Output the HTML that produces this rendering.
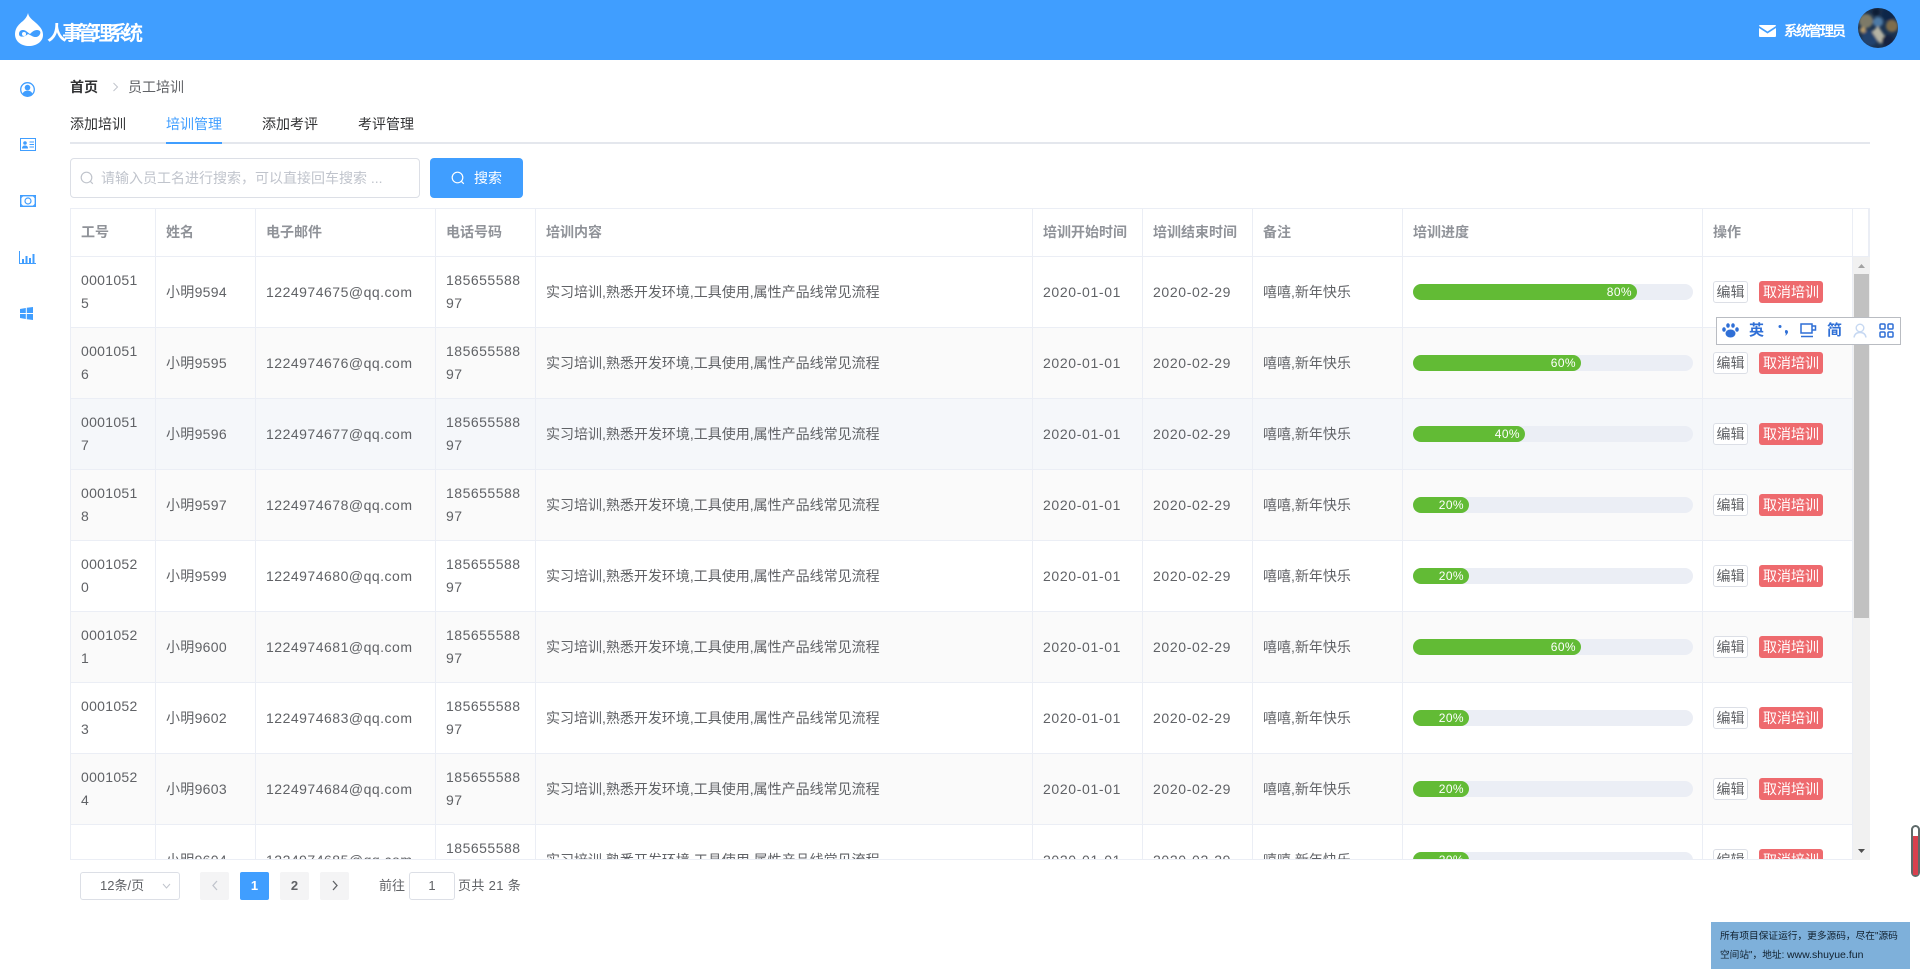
<!DOCTYPE html>
<html lang="zh-CN">
<head>
<meta charset="utf-8">
<title>人事管理系统</title>
<style>
*{box-sizing:border-box}
html,body{margin:0;padding:0;width:1920px;height:969px;overflow:hidden;background:#fff;font-family:"Liberation Sans","Noto Sans CJK SC",sans-serif;font-size:14px;color:#606266}
.a{position:absolute}
.hd{left:0;top:0;width:1920px;height:60px;background:#409eff}
.logot{left:47px;top:19px;font-size:20px;font-weight:700;color:#fff;letter-spacing:-4.8px;line-height:30px;white-space:nowrap}
.admin{left:1784px;top:21px;font-size:14px;font-weight:700;color:#fff;letter-spacing:-2px;line-height:20px;white-space:nowrap}
.crumb{top:77px;line-height:20px;white-space:nowrap}
.tab{top:114px;line-height:20px;color:#303133;white-space:nowrap}
.tw{left:70px;top:208px;width:1800px;height:652px;overflow:hidden;border-top:1px solid #ebeef5;border-left:1px solid #ebeef5;border-right:1px solid #ebeef5;border-bottom:1px solid #ebeef5}
table{border-collapse:separate;border-spacing:0;table-layout:fixed;width:1798px}
th,td{padding:12px 10px;line-height:23px;text-align:left;border-right:1px solid #ebeef5;border-bottom:1px solid #ebeef5;overflow:hidden;vertical-align:middle}
th{font-weight:700;color:#909399;height:48px;white-space:nowrap}
td{height:71px;white-space:nowrap}
tr.s td{background:#fafafa}
tr.h td{background:#f5f7fa}
.d{letter-spacing:.3px}
.p{letter-spacing:.5px}
.t{letter-spacing:.65px}
.e{letter-spacing:.5px}
.pb{width:280px;height:16px;border-radius:8px;background:#ebeef5;position:relative}
.pb i{display:block;height:16px;border-radius:8px;background:#62bb35;color:#fff;font-style:normal;font-size:12px;line-height:16px;text-align:right;padding-right:5px;letter-spacing:.4px}
.b1,.b2{display:inline-block;height:22px;line-height:20px;border-radius:3px;vertical-align:middle;text-align:center;position:relative;top:-1px}
.b1{width:35px;border:1px solid #dcdfe6;background:#fff;color:#606266}
.b2{width:64px;background:#ee6a6e;color:#fff;line-height:22px;margin-left:11px}
.pg{top:872px;width:29px;height:28px;border-radius:2px;background:#f4f4f5;text-align:center;line-height:28px;font-weight:700;font-size:13px;color:#606266}
.ptxt{top:876px;line-height:20px;font-size:13px;white-space:nowrap}
</style>
</head>
<body>
<div class="a hd"></div>
<svg class="a" style="left:15px;top:13px" width="28" height="33" viewBox="0 0 28 33">
<path d="M13 0C14 6 20 8 24 13C27 16 28 19 28 22C28 29 21 33 14 33C7 33 0 29 0 21C0 15 4 11 8 8C10 6 12 4 13 0Z" fill="#fff"/>
<path d="M4 21C4 17 8 16 11 18L15 21C17 19 19 17 22 17C25 17 26 19 25 21C24 24 20 25 17 23L13 21C10 24 4 25 4 21Z" fill="#409eff"/>
<circle cx="9" cy="21" r="2" fill="#fff"/>
</svg>
<div class="a logot">人事管理系统</div>
<svg class="a" style="left:1759px;top:25px" width="17" height="12" viewBox="0 0 17 12"><path d="M0 1C0 .4.4 0 1 0H16C16.600 0 17 .4 17 1L8.500 6.500Z M0 3L8.500 8.500L17 3V11C17 11.600 16.600 12 16 12H1C.4 12 0 11.600 0 11Z" fill="#fff"/></svg>
<div class="a admin">系统管理员</div>
<svg class="a" style="left:1858px;top:8px" width="40" height="40" viewBox="0 0 40 40">
<defs><clipPath id="c"><circle cx="20" cy="20" r="20"/></clipPath><filter id="bl"><feGaussianBlur stdDeviation="1.200"/></filter></defs>
<g clip-path="url(#c)">
<rect width="40" height="40" fill="#1c3350"/>
<g filter="url(#bl)">
<circle cx="8" cy="13" r="7" fill="#7d7a68"/>
<circle cx="30" cy="6" r="7" fill="#10284a"/>
<circle cx="34" cy="18" r="6" fill="#7f6d4c"/>
<circle cx="12" cy="30" r="8" fill="#20426d"/>
<circle cx="20" cy="14" r="5" fill="#4d7aa6"/>
<path d="M20 18L28 30L22 36L14 24Z" fill="#b5b3a4"/>
<circle cx="30" cy="33" r="6" fill="#12233f"/>
<circle cx="5" cy="22" r="3" fill="#b59a6a"/>
<circle cx="18" cy="4" r="4" fill="#0e1e36"/>
</g>
</g>
</svg>

<!-- sidebar -->
<svg class="a" style="left:20px;top:82px" width="15" height="15" viewBox="0 0 15 15"><circle cx="7.500" cy="7.500" r="6.800" fill="none" stroke="#409eff" stroke-width="1.300"/><circle cx="7.500" cy="5.600" r="2.800" fill="#409eff"/><path d="M2.500 12.500C3 9.500 5 8.800 7.500 8.800S12 9.500 12.500 12.500C11 14.500 4 14.500 2.500 12.500Z" fill="#409eff"/></svg>
<svg class="a" style="left:20px;top:138px" width="16" height="13" viewBox="0 0 16 13"><rect x=".5" y=".5" width="15" height="12" fill="none" stroke="#409eff"/><circle cx="5" cy="5" r="1.800" fill="#409eff"/><path d="M2 10.500C2 8 3.500 7.500 5 7.500S8 8 8 10.500Z" fill="#409eff"/><path d="M9.500 4H14M9.500 6.500H14M9.500 9H14" stroke="#409eff"/></svg>
<svg class="a" style="left:20px;top:195px" width="16" height="12" viewBox="0 0 16 12"><rect x=".7" y=".7" width="14.600" height="10.600" fill="none" stroke="#409eff" stroke-width="1.400"/><circle cx="8" cy="6" r="3" fill="none" stroke="#409eff" stroke-width="1.200"/><path d="M.7 3L3 .7M13 .7L15.300 3M.7 9L3 11.300M13 11.300L15.300 9" stroke="#409eff"/></svg>
<svg class="a" style="left:19px;top:251px" width="17" height="13" viewBox="0 0 17 13"><path d="M.5 0V12.500H17" fill="none" stroke="#409eff"/><path d="M3 8H5V12H3ZM6.500 5H8.500V12H6.500ZM10 7H12V12H10ZM13.500 3H15.500V12H13.500Z" fill="#409eff"/></svg>
<svg class="a" style="left:20px;top:307px" width="13" height="13" viewBox="0 0 13 13"><path d="M0 2L5.800 1V6H0ZM6.800 .8L13 0V6H6.800ZM0 7H5.800V12L0 11ZM6.800 7H13V13L6.800 12.200Z" fill="#409eff"/></svg>

<!-- breadcrumb -->
<div class="a crumb" style="left:70px;font-weight:700;color:#303133">首页</div>
<svg class="a" style="left:112px;top:82px" width="7" height="10" viewBox="0 0 7 10"><path d="M1.500 1L5.500 5L1.500 9" fill="none" stroke="#c0c4cc"/></svg>
<div class="a crumb" style="left:128px;color:#606266">员工培训</div>

<!-- tabs -->
<div class="a tab" style="left:70px">添加培训</div>
<div class="a tab" style="left:166px;color:#409eff">培训管理</div>
<div class="a tab" style="left:262px">添加考评</div>
<div class="a tab" style="left:358px">考评管理</div>
<div class="a" style="left:70px;top:142px;width:1800px;height:2px;background:#e4e7ed"></div>
<div class="a" style="left:166px;top:142px;width:56px;height:2px;background:#409eff"></div>

<!-- search -->
<div class="a" style="left:70px;top:158px;width:350px;height:40px;border:1px solid #dcdfe6;border-radius:4px;background:#fff"></div>
<svg class="a" style="left:80px;top:171px" width="14" height="14" viewBox="0 0 14 14"><circle cx="6.500" cy="6.500" r="5.300" fill="none" stroke="#c0c4cc" stroke-width="1.200"/><path d="M10.300 10.300L12.800 12.800" stroke="#c0c4cc" stroke-width="1.200"/></svg>
<div class="a" style="left:101px;top:168px;line-height:20px;color:#c0c4cc;white-space:nowrap">请输入员工名进行搜索，可以直接回车搜索 ...</div>
<div class="a" style="left:430px;top:158px;width:93px;height:40px;border-radius:4px;background:#409eff"></div>
<svg class="a" style="left:451px;top:171px" width="14" height="14" viewBox="0 0 14 14"><circle cx="6.500" cy="6.500" r="5.300" fill="none" stroke="#fff" stroke-width="1.200"/><path d="M10.300 10.300L12.800 12.800" stroke="#fff" stroke-width="1.200"/></svg>
<div class="a" style="left:474px;top:168px;line-height:20px;color:#fff;white-space:nowrap">搜索</div>

<!-- table -->
<div class="a tw">
<table>
<colgroup><col style="width:85px"><col style="width:100px"><col style="width:180px"><col style="width:100px"><col style="width:497px"><col style="width:110px"><col style="width:110px"><col style="width:150px"><col style="width:300px"><col style="width:150px"><col style="width:16px"></colgroup>
<thead><tr><th>工号</th><th>姓名</th><th>电子邮件</th><th>电话号码</th><th>培训内容</th><th>培训开始时间</th><th>培训结束时间</th><th>备注</th><th>培训进度</th><th>操作</th><th style="padding:0"></th></tr></thead>
<tbody>
<tr><td class="d">0001051<br>5</td><td class="d">小明9594</td><td class="e">1224974675@qq.com</td><td class="p">185655588<br>97</td><td>实习培训,熟悉开发环境,工具使用,属性产品线常见流程</td><td class="t">2020-01-01</td><td class="t">2020-02-29</td><td>嘻嘻,新年快乐</td><td><div class="pb"><i style="width:80%">80%</i></div></td><td><span class="b1">编辑</span><span class="b2">取消培训</span></td><td style="padding:0"></td></tr>
<tr class="s"><td class="d">0001051<br>6</td><td class="d">小明9595</td><td class="e">1224974676@qq.com</td><td class="p">185655588<br>97</td><td>实习培训,熟悉开发环境,工具使用,属性产品线常见流程</td><td class="t">2020-01-01</td><td class="t">2020-02-29</td><td>嘻嘻,新年快乐</td><td><div class="pb"><i style="width:60%">60%</i></div></td><td><span class="b1">编辑</span><span class="b2">取消培训</span></td><td style="padding:0"></td></tr>
<tr class="h"><td class="d">0001051<br>7</td><td class="d">小明9596</td><td class="e">1224974677@qq.com</td><td class="p">185655588<br>97</td><td>实习培训,熟悉开发环境,工具使用,属性产品线常见流程</td><td class="t">2020-01-01</td><td class="t">2020-02-29</td><td>嘻嘻,新年快乐</td><td><div class="pb"><i style="width:40%">40%</i></div></td><td><span class="b1">编辑</span><span class="b2">取消培训</span></td><td style="padding:0"></td></tr>
<tr class="s"><td class="d">0001051<br>8</td><td class="d">小明9597</td><td class="e">1224974678@qq.com</td><td class="p">185655588<br>97</td><td>实习培训,熟悉开发环境,工具使用,属性产品线常见流程</td><td class="t">2020-01-01</td><td class="t">2020-02-29</td><td>嘻嘻,新年快乐</td><td><div class="pb"><i style="width:20%">20%</i></div></td><td><span class="b1">编辑</span><span class="b2">取消培训</span></td><td style="padding:0"></td></tr>
<tr><td class="d">0001052<br>0</td><td class="d">小明9599</td><td class="e">1224974680@qq.com</td><td class="p">185655588<br>97</td><td>实习培训,熟悉开发环境,工具使用,属性产品线常见流程</td><td class="t">2020-01-01</td><td class="t">2020-02-29</td><td>嘻嘻,新年快乐</td><td><div class="pb"><i style="width:20%">20%</i></div></td><td><span class="b1">编辑</span><span class="b2">取消培训</span></td><td style="padding:0"></td></tr>
<tr class="s"><td class="d">0001052<br>1</td><td class="d">小明9600</td><td class="e">1224974681@qq.com</td><td class="p">185655588<br>97</td><td>实习培训,熟悉开发环境,工具使用,属性产品线常见流程</td><td class="t">2020-01-01</td><td class="t">2020-02-29</td><td>嘻嘻,新年快乐</td><td><div class="pb"><i style="width:60%">60%</i></div></td><td><span class="b1">编辑</span><span class="b2">取消培训</span></td><td style="padding:0"></td></tr>
<tr><td class="d">0001052<br>3</td><td class="d">小明9602</td><td class="e">1224974683@qq.com</td><td class="p">185655588<br>97</td><td>实习培训,熟悉开发环境,工具使用,属性产品线常见流程</td><td class="t">2020-01-01</td><td class="t">2020-02-29</td><td>嘻嘻,新年快乐</td><td><div class="pb"><i style="width:20%">20%</i></div></td><td><span class="b1">编辑</span><span class="b2">取消培训</span></td><td style="padding:0"></td></tr>
<tr class="s"><td class="d">0001052<br>4</td><td class="d">小明9603</td><td class="e">1224974684@qq.com</td><td class="p">185655588<br>97</td><td>实习培训,熟悉开发环境,工具使用,属性产品线常见流程</td><td class="t">2020-01-01</td><td class="t">2020-02-29</td><td>嘻嘻,新年快乐</td><td><div class="pb"><i style="width:20%">20%</i></div></td><td><span class="b1">编辑</span><span class="b2">取消培训</span></td><td style="padding:0"></td></tr>
<tr><td class="d"></td><td class="d">小明9604</td><td class="e">1224974685@qq.com</td><td class="p">185655588<br>97</td><td>实习培训,熟悉开发环境,工具使用,属性产品线常见流程</td><td class="t">2020-01-01</td><td class="t">2020-02-29</td><td>嘻嘻,新年快乐</td><td><div class="pb"><i style="width:20%">20%</i></div></td><td><span class="b1">编辑</span><span class="b2">取消培训</span></td><td style="padding:0"></td></tr>
</tbody>
</table>
</div>

<!-- scrollbar -->
<div class="a" style="left:1853px;top:257px;width:17px;height:603px;background:#f1f1f1"></div>
<div class="a" style="left:1854px;top:274px;width:15px;height:344px;background:#c1c1c1"></div>
<svg class="a" style="left:1857px;top:263px" width="9" height="6" viewBox="0 0 9 6"><path d="M4.500 1L8 5H1Z" fill="#a3a3a3"/></svg>
<svg class="a" style="left:1857px;top:848px" width="9" height="6" viewBox="0 0 9 6"><path d="M1 1H8L4.500 5Z" fill="#505050"/></svg>

<!-- pagination -->
<div class="a" style="left:80px;top:872px;width:100px;height:28px;border:1px solid #dcdfe6;border-radius:3px;background:#fff"></div>
<div class="a ptxt" style="left:100px;color:#606266">12条/页</div>
<svg class="a" style="left:162px;top:883px" width="9" height="6" viewBox="0 0 9 6"><path d="M1 1L4.500 5L8 1" fill="none" stroke="#c0c4cc"/></svg>
<div class="a pg" style="left:200px"><svg width="8" height="11" viewBox="0 0 8 11" style="vertical-align:-1px"><path d="M6 1L2 5.500L6 10" fill="none" stroke="#c0c4cc" stroke-width="1.300"/></svg></div>
<div class="a pg" style="left:240px;background:#409eff;color:#fff">1</div>
<div class="a pg" style="left:280px">2</div>
<div class="a pg" style="left:320px"><svg width="8" height="11" viewBox="0 0 8 11" style="vertical-align:-1px"><path d="M2 1L6 5.500L2 10" fill="none" stroke="#606266" stroke-width="1.300"/></svg></div>
<div class="a ptxt" style="left:379px">前往</div>
<div class="a" style="left:409px;top:872px;width:46px;height:28px;border:1px solid #dcdfe6;border-radius:3px;background:#fff;text-align:center;line-height:26px;font-size:13px">1</div>
<div class="a ptxt" style="left:458px;letter-spacing:.35px">页共 21 条</div>

<!-- IME toolbar -->
<div class="a" style="left:1716px;top:317px;width:185px;height:28px;background:#fff;border:1px solid #b9bcc2"></div>
<svg class="a" style="left:1722px;top:323px" width="17" height="15" viewBox="0 0 17 15"><ellipse cx="8.500" cy="10.500" rx="5" ry="4" fill="#2f6fd6"/><ellipse cx="2" cy="6.500" rx="1.800" ry="2.300" fill="#2f6fd6"/><ellipse cx="6" cy="2.500" rx="1.800" ry="2.300" fill="#2f6fd6"/><ellipse cx="11" cy="2.500" rx="1.800" ry="2.300" fill="#2f6fd6"/><ellipse cx="15" cy="6.500" rx="1.800" ry="2.300" fill="#2f6fd6"/></svg>
<div class="a" style="left:1749px;top:322px;font-size:15px;line-height:18px;font-weight:700;color:#2f6fd6">英</div>
<svg class="a" style="left:1778px;top:324px" width="11" height="13" viewBox="0 0 11 13"><circle cx="2" cy="2.500" r="1.500" fill="#2f6fd6"/><path d="M8 6C10 6 10.500 8 9.500 9.500L7.500 12L7.800 9.500C6.500 8.500 6.800 6 8 6Z" fill="#2f6fd6"/></svg>
<svg class="a" style="left:1800px;top:323px" width="17" height="15" viewBox="0 0 17 15"><path d="M1 1H12V10H1ZM12 3H15.500V7H12" fill="none" stroke="#2f6fd6" stroke-width="1.500"/><path d="M1 13.500H13" stroke="#2f6fd6" stroke-width="1.500"/></svg>
<div class="a" style="left:1827px;top:322px;font-size:15px;line-height:18px;font-weight:700;color:#2f6fd6">简</div>
<svg class="a" style="left:1853px;top:323px" width="14" height="15" viewBox="0 0 14 15"><circle cx="7" cy="5" r="3.800" fill="none" stroke="#c6d8f2" stroke-width="1.400"/><path d="M1 14.500C1.500 11 4 9.500 7 9.500S12.500 11 13 14.500" fill="none" stroke="#c6d8f2" stroke-width="1.400"/></svg>
<svg class="a" style="left:1879px;top:323px" width="15" height="15" viewBox="0 0 15 15"><g fill="none" stroke="#2f6fd6" stroke-width="1.500"><rect x="1" y="1" width="5" height="5" rx="1"/><rect x="9" y="1" width="5" height="5" rx="1"/><rect x="1" y="9" width="5" height="5" rx="1"/><rect x="9" y="9" width="5" height="5" rx="1"/></g></svg>

<!-- thermometer -->
<div class="a" style="left:1911px;top:825px;width:9px;height:52px;border:2px solid #5e6a6a;border-radius:5px;background:#fff"></div>
<div class="a" style="left:1913px;top:836px;width:5px;height:39px;background:#d8404e"></div>

<!-- ad box -->
<div class="a" style="left:1711px;top:922px;width:199px;height:47px;background:#7eb0da;color:#10202e;font-size:9.700px;line-height:18px;padding:6px 0 0 9px;white-space:nowrap">所有项目保证运行，更多源码，尽在"源码<br>空间站"，地址: <span style="font-size:10.500px">www.shuyue.fun</span></div>
</body>
</html>
